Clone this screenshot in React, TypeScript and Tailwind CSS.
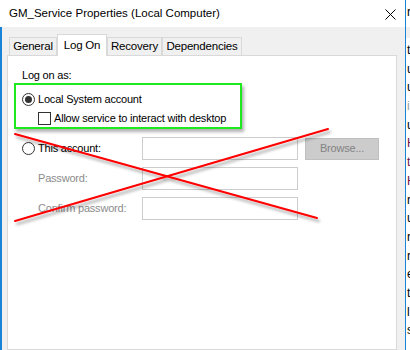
import React from "react";

const font = { fontFamily: '"Liberation Sans", Arial, sans-serif' };

const tabs = [
  { label: "General", w: "w-[48px]" },
  { label: "Log On", w: "w-[50px]", active: true },
  { label: "Recovery", w: "w-[55px]" },
  { label: "Dependencies", w: "w-[80px]" },
];

const sliver: { ch: string; color?: string }[] = [
  { ch: "t" },
  { ch: "u" },
  { ch: "u" },
  { ch: "i", color: "text-[#9a9a9a]" },
  { ch: "u" },
  { ch: "H", color: "text-[#6a1040]" },
  { ch: "t", color: "text-[#6a1040]" },
  { ch: "H", color: "text-[#6a1040]" },
  { ch: "r" },
  { ch: "u" },
  { ch: "r" },
  { ch: "r" },
  { ch: "e" },
  { ch: "t" },
  { ch: "l" },
  { ch: "s" },
];

function Radio({ checked }: { checked?: boolean }) {
  return (
    <span className="flex h-[13px] w-[13px] shrink-0 items-center justify-center rounded-full border border-[#333333] bg-white">
      {checked && <span className="h-[7px] w-[7px] rounded-full bg-[#333333]" />}
    </span>
  );
}

function TextBox() {
  return <div className="h-[23px] w-[156px] border border-[#cccccc] bg-white" />;
}

export default function App() {
  return (
    <div
      className="relative flex h-[350px] w-[410px] overflow-hidden bg-white text-[11px] tracking-[-0.2px] text-black"
      style={font}
    >
      {/* dialog window */}
      <div className="flex w-[405px] flex-col">
        <div className="flex h-[27px] items-center justify-between bg-white pl-[9px] pr-[9px]">
          <span className="text-[11.5px] tracking-normal">GM_Service Properties (Local Computer)</span>
          <svg width="11" height="11" viewBox="0 0 11 11" className="mt-[1px]">
            <path d="M0.5 0.5 L10.5 10.5 M10.5 0.5 L0.5 10.5" stroke="#000" strokeWidth="1" />
          </svg>
        </div>

        <div className="flex flex-1 flex-col border-l-2 border-[#1883d7] bg-[#f0f0f0] pl-[5px] pr-[8px] pt-[7px]">
          {/* tabs */}
          <div className="flex items-end pl-[2px]">
            {tabs.map((t) =>
              t.active ? (
                <div
                  key={t.label}
                  className={`${t.w} relative z-10 -mb-px flex h-[22px] items-start justify-center border border-b-0 border-[#d9d9d9] bg-white pt-[2px] text-[11.5px]`}
                >
                  {t.label}
                </div>
              ) : (
                <div
                  key={t.label}
                  className={`${t.w} flex h-[18px] items-center justify-center border border-b-0 border-[#d9d9d9] bg-[#f0f0f0] pt-[1px] text-[11.5px]`}
                >
                  {t.label}
                </div>
              ),
            )}
          </div>

          {/* panel */}
          <div className="flex flex-1 flex-col border border-[#d9d9d9] bg-white pl-[14px]">
            <div className="mt-[12px] h-[14px] leading-[14px]">Log on as:</div>

            <div className="mt-[9px] flex h-[16px] items-center gap-[3px]">
              <Radio checked />
              <span>Local System account</span>
            </div>

            <div className="mt-[3px] flex h-[16px] items-center gap-[3px] pl-[16px]">
              <span className="h-[13px] w-[13px] border border-[#333333] bg-white" />
              <span>Allow service to interact with desktop</span>
            </div>

            <div className="mt-[11px] flex h-[23px] items-center">
              <div className="flex w-[120px] items-center gap-[3px]">
                <Radio />
                <span>This account:</span>
              </div>
              <TextBox />
              <div className="ml-[7px] flex h-[22px] w-[74px] items-center justify-center border border-[#bfbfbf] bg-[#cccccc] text-[#838383]">
                Browse...
              </div>
            </div>

            <div className="mt-[7px] flex h-[23px] items-center">
              <div className="w-[120px] pl-[16px] text-[#8c8c8c]">Password:</div>
              <TextBox />
            </div>

            <div className="mt-[7px] flex h-[23px] items-center">
              <div className="w-[120px] pl-[16px] text-[#8c8c8c]">Confirm password:</div>
              <TextBox />
            </div>
          </div>
        </div>
      </div>

      {/* window edge */}
      <div className="w-px bg-[#1883d7]" />

      {/* sliver of the window behind */}
      <div className="flex w-[4px] flex-col overflow-hidden bg-white text-[12px] tracking-normal">
        <div className="h-[24px] pl-px leading-[24px]">r</div>
        <div className="h-[3px]" />
        <div className="h-[11px] bg-[#f0f0f0]" />
        <div className="flex flex-col pl-px pt-[3px]">
          {sliver.map((s, i) => (
            <div key={i} className={`h-[18.7px] leading-[18.7px] ${s.color ?? ""}`}>
              {s.ch}
            </div>
          ))}
        </div>
      </div>

      {/* annotations */}
      <div className="absolute left-[14px] top-[83px] h-[46px] w-[228px] border-2 border-[#1ee81e] shadow-[2px_3px_3px_rgba(0,0,0,0.3)]" />
      <svg className="pointer-events-none absolute left-0 top-0" width="410" height="350">
        <defs>
          <filter id="sh" x="-10%" y="-10%" width="120%" height="140%">
            <feDropShadow dx="2" dy="3" stdDeviation="1.5" floodColor="#000" floodOpacity="0.35" />
          </filter>
        </defs>
        <g filter="url(#sh)" stroke="#ff0000" strokeWidth="2" strokeLinecap="round">
          <line x1="15" y1="134" x2="317" y2="218" />
          <line x1="15" y1="221" x2="328" y2="129" />
        </g>
      </svg>
    </div>
  );
}
